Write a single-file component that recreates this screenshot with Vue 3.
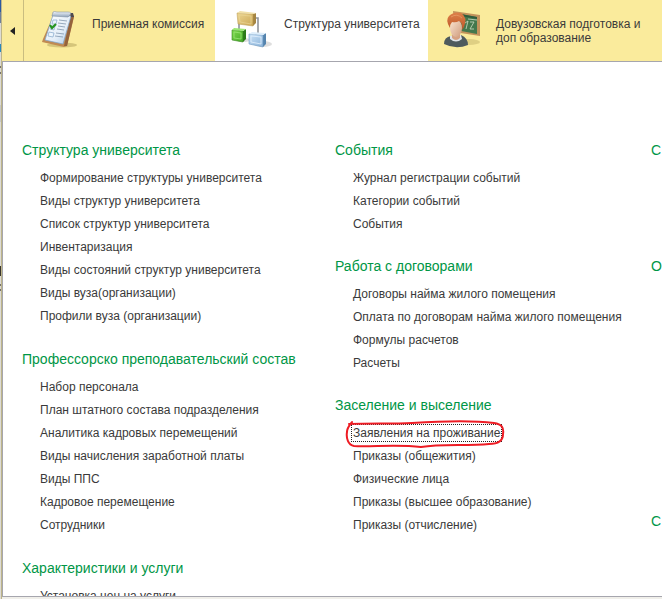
<template>
  <div class="workspace">
    <div class="backdrop" aria-hidden="true">
      <svg width="2" height="599" viewBox="0 0 2 599">
        <rect width="2" height="599" fill="#dddbd5" />
        <rect width="2" height="12" fill="#2c5aa0" />
        <rect y="12" width="2" height="11" fill="#6e7f99" />
        <rect y="44" width="2" height="8" fill="#2789bd" />
        <rect y="66" width="2" height="2" fill="#77736c" />
        <rect y="72" width="2" height="2" fill="#77736c" />
        <rect y="105" width="2" height="17" fill="#c7c7c7" />
        <rect y="266" width="2" height="10" fill="#39352c" />
        <rect y="284" width="2" height="2" fill="#77736c" />
        <rect y="289" width="2" height="2" fill="#77736c" />
        <rect x="1" width="1" height="599" fill="#bdb58a" />
      </svg>
    </div>

    <div class="window">
      <nav class="sections-bar">
        <button class="scroll-button" type="button" aria-label="Назад">
          <svg width="5" height="8" viewBox="0 0 5 8">
            <path d="M5 0V8L0 4Z" fill="#222" />
          </svg>
        </button>

        <button class="tab tab-admission" type="button">
          <svg class="tab-icon" width="40" height="40" viewBox="0 0 40 40">
            <defs>
              <linearGradient id="paper" x1="0" y1="0" x2="1" y2="1">
                <stop offset="0" stop-color="#ffffff" />
                <stop offset="0.6" stop-color="#e4eef8" />
                <stop offset="1" stop-color="#a9c8e6" />
              </linearGradient>
              <linearGradient id="clip" x1="0" y1="0" x2="0" y2="1">
                <stop offset="0" stop-color="#f4f7fb" />
                <stop offset="1" stop-color="#8fa3bb" />
              </linearGradient>
            </defs>
            <ellipse cx="22" cy="35" rx="15" ry="2.5" fill="#b7a55f" opacity="0.55" />
            <path d="M14 4L33 4L34 7L27 36L24 37L2 32L3 29Z" fill="#c08a52" />
            <path d="M31 5L34 6L27 36L24 36Z" fill="#94633c" />
            <path d="M13 5L31 6L23 34L5 30Z" fill="url(#paper)" stroke="#7ba4ce" stroke-width="0.7" />
            <path d="M30 3L33 3L34 7L31 7Z" fill="#4d4a50" />
            <path d="M13 2Q14 1 17 2H28Q32 2 30 5L28 7L12 6Z" fill="url(#clip)" stroke="#8190a3" stroke-width="0.6" />
            <path d="M13 10L17 10L16 14L12 14ZM11 16L15 16L14 20L10 19ZM9 22L14 23L13 27L8 26Z" fill="#edf5fc" stroke="#8fb0d0" stroke-width="0.8" />
            <path d="M19 10L27 11M18 13L26 14M18 16L25 17M17 19L24 20M16 23L24 24M15 26L23 27" stroke="#8095ad" stroke-width="0.8" />
            <path d="M10 15L12 18L16 14" fill="none" stroke="#259420" stroke-width="2.2" />
          </svg>
          <span class="tab-title">Приемная комиссия</span>
        </button>

        <button class="tab tab-structure tab-active" type="button">
          <svg class="tab-icon" width="44" height="40" viewBox="0 0 44 40">
            <defs>
              <linearGradient id="sand" x1="0" y1="0" x2="1" y2="1">
                <stop offset="0" stop-color="#ecd590" />
                <stop offset="1" stop-color="#cba857" />
              </linearGradient>
              <linearGradient id="leaf" x1="0" y1="0" x2="1" y2="1">
                <stop offset="0" stop-color="#7dd84e" />
                <stop offset="1" stop-color="#45ab27" />
              </linearGradient>
              <linearGradient id="sky" x1="0" y1="0" x2="1" y2="1">
                <stop offset="0" stop-color="#c9e1f6" />
                <stop offset="1" stop-color="#8cb4da" />
              </linearGradient>
            </defs>
            <ellipse cx="32" cy="34" rx="9" ry="3" fill="#c8c8c8" opacity="0.6" />
            <ellipse cx="12" cy="30" rx="7" ry="2" fill="#c8c8c8" opacity="0.6" />
            <path d="M8 14V21M24 8H27V24" fill="none" stroke="#90949b" stroke-width="1.6" />
            <path d="M22 4L25 3V13L22 16Z" fill="#a58542" />
            <path d="M6 3L22 4V16L7 14Z" fill="url(#sand)" stroke="#b7964e" stroke-width="0.5" />
            <path d="M8 5L20 6V14L9 12Z" fill="none" stroke="#e9d597" stroke-width="0.7" />
            <path d="M6 3L9 1L25 3L22 4Z" fill="#f1e0a8" />
            <path d="M12 21L15 19V29L12 32Z" fill="#2c7b19" />
            <path d="M1 20L12 21V32L1 30Z" fill="url(#leaf)" stroke="#37861f" stroke-width="0.6" />
            <path d="M3 22L10 23V29L3 28Z" fill="none" stroke="#99e573" stroke-width="0.8" />
            <path d="M1 20L3 18L15 19L12 21Z" fill="#9ce775" />
            <path d="M32 25L35 23V34L32 37Z" fill="#5484ae" />
            <path d="M18 24L32 25V37L18 34Z" fill="url(#sky)" stroke="#6d98c1" stroke-width="0.6" />
            <path d="M20 26L30 27V34L20 32Z" fill="none" stroke="#e2f0fc" stroke-width="0.8" />
            <path d="M18 24L21 22L35 23L32 25Z" fill="#deeefb" />
          </svg>
          <span class="tab-title">Структура университета</span>
        </button>

        <button class="tab tab-courses" type="button">
          <svg class="tab-icon" width="40" height="40" viewBox="0 0 40 40">
            <defs>
              <linearGradient id="face" x1="0" y1="0" x2="1" y2="1">
                <stop offset="0" stop-color="#fbe6d3" />
                <stop offset="1" stop-color="#cf9b7c" />
              </linearGradient>
              <linearGradient id="hair" x1="0" y1="0" x2="0" y2="1">
                <stop offset="0" stop-color="#dd8049" />
                <stop offset="1" stop-color="#bd5529" />
              </linearGradient>
            </defs>
            <ellipse cx="25" cy="32" rx="11" ry="3" fill="#b7a55f" opacity="0.4" />
            <path d="M9 1L36 5V26L10 22Z" fill="#c3935c" />
            <path d="M11 3L33 7V24L12 20Z" fill="#44784d" />
            <path d="M11 3L33 7V9L12 5Z" fill="#315c3d" />
            <path d="M21 13L24 11L22 19M26 12L30 12L26 19L30 19M24 9L33 10" fill="none" stroke="#bfd1b8" stroke-width="0.9" />
            <path d="M0 34Q0 27 7 26L17 25Q24 28 24 35Q12 40 0 34Z" fill="#4e5a5d" />
            <path d="M6 26L17 25L18 29Q12 34 6 29Z" fill="#dfe3e8" />
            <path d="M8 22H16V28Q12 32 8 28Z" fill="#d6a283" />
            <ellipse cx="12" cy="18" rx="6" ry="9" fill="url(#face)" />
            <path d="M6 18Q1 10 5 6Q10 1 17 3Q24 7 20 17L18 20Q19 13 15 11Q12 13 8 12Q6 14 6 18Z" fill="url(#hair)" />
            <path d="M7 7Q13 3 18 8" fill="none" stroke="#eaa06c" stroke-width="0.7" />
          </svg>
          <span class="tab-title">Довузовская подготовка и доп образование</span>
        </button>
      </nav>

      <main class="menu-panel">
        <div v-for="(column, index) in columns" :key="index" class="menu-column">
          <section
            v-for="(group, groupIndex) in column"
            :key="groupIndex"
            class="menu-group"
            :style="{ height: groupHeight(group) }"
          >
            <h2 class="group-title">{{ group.title }}</h2>
            <ul v-if="group.items" class="group-items">
              <li v-for="item in group.items" :key="item" class="group-item">
                <a
                  href="#"
                  class="menu-link"
                  :class="{ 'menu-link-selected': item === selectedItem }"
                  @click.prevent="selectedItem = item"
                >{{ item }}</a>
                <svg v-if="item === markedItem" class="marker" width="160" height="30" viewBox="0 0 160 30">
                  <path
                    d="M4 5C25 4 46 5 67 4C98 2 126 1 149 4C157 5 159 9 158 15C158 22 152 25 144 25C122 27 96 25 76 28C52 25 27 28 9 27C3 26 1 19 2 13C2 9 4 7 7 3"
                    fill="none"
                    stroke="#ee1c24"
                    stroke-width="2"
                    stroke-linecap="round"
                  />
                </svg>
              </li>
            </ul>
          </section>
        </div>
      </main>
      <div class="window-edge"></div>
    </div>
  </div>
</template>

<script setup>
import { ref } from 'vue'

const markedItem = 'Заявления на проживание'
const selectedItem = ref(markedItem)

const columns = [
  [
    {
      title: 'Структура университета',
      items: [
        'Формирование структуры университета',
        'Виды структур университета',
        'Список структур университета',
        'Инвентаризация',
        'Виды состояний структур университета',
        'Виды вуза(организации)',
        'Профили вуза (организации)'
      ]
    },
    {
      title: 'Профессорско преподавательский состав',
      items: [
        'Набор персонала',
        'План штатного состава подразделения',
        'Аналитика кадровых перемещений',
        'Виды начисления заработной платы',
        'Виды ППС',
        'Кадровое перемещение',
        'Сотрудники'
      ]
    },
    {
      title: 'Характеристики и услуги',
      items: ['Установка цен на услуги']
    }
  ],
  [
    {
      title: 'События',
      items: ['Журнал регистрации событий', 'Категории событий', 'События']
    },
    {
      title: 'Работа с договорами',
      items: [
        'Договоры найма жилого помещения',
        'Оплата по договорам найма жилого помещения',
        'Формулы расчетов',
        'Расчеты'
      ]
    },
    {
      title: 'Заселение и выселение',
      items: [
        'Заявления на проживание',
        'Приказы (общежития)',
        'Физические лица',
        'Приказы (высшее образование)',
        'Приказы (отчисление)'
      ]
    }
  ],
  [
    { title: 'С', rows: 3 },
    { title: 'О', rows: 9 },
    { title: 'С', rows: 1 }
  ]
]

// the title and the gap under a group take two rows
const groupHeight = (group) => {
  const rows = group.items ? group.items.length : group.rows
  return `${Math.floor((rows + 2) * 23.25)}px`
}
</script>

<style>
body {
  margin: 0;
  overflow: hidden;
}
</style>

<style scoped>
.workspace {
  display: flex;
  height: 100vh;
  font-family: "Liberation Sans", Arial, sans-serif;
  font-size: 12px;
  color: #3a3a3a;
  background: #fff;
}

.backdrop {
  width: 2px;
  flex: none;
  overflow: hidden;
  background: #dddbd5;
}

.window {
  flex: 1;
  min-width: 0;
  display: flex;
  flex-direction: column;
}

.sections-bar {
  display: flex;
  flex: none;
  height: 61px;
  background: #faeb9c;
}

.scroll-button,
.tab {
  border: 0;
  padding: 0;
  font: inherit;
  color: inherit;
  background: none;
  cursor: pointer;
}

.scroll-button {
  display: flex;
  align-items: center;
  justify-content: center;
  width: 22px;
  flex: none;
  border-right: 1px solid #c9bd80;
}

.tab {
  display: flex;
  align-items: flex-start;
  box-sizing: border-box;
  padding-top: 10px;
  text-align: left;
}

.tab-admission {
  width: 191px;
  flex: none;
  padding-left: 16px;
  gap: 12px;
}

.tab-structure {
  width: 213px;
  flex: none;
  padding-left: 16px;
  gap: 9px;
}

.tab-courses {
  flex: 1;
  min-width: 0;
  padding-left: 16px;
  gap: 12px;
}

.tab-active {
  background: #fff;
}

.tab-icon {
  flex: none;
}

.tab-title {
  padding-top: 7px;
  line-height: 14px;
}

.menu-panel {
  flex: 1;
  min-height: 0;
  display: grid;
  grid-template-columns: 313px 316px 1fr;
  box-sizing: border-box;
  padding: 78px 0 0 19px;
  overflow: hidden;
  background: #fff;
  border: 1px solid #a6a6ae;
  border-right: 0;
}

.menu-column {
  min-width: 0;
}

.group-title {
  margin: 0 0 7px;
  font-size: 14px;
  font-weight: normal;
  line-height: 20px;
  white-space: nowrap;
  color: #009646;
}

.group-items {
  margin: 0;
  padding: 0 0 0 18px;
  list-style: none;
}

.group-item {
  position: relative;
  height: 23px;
  line-height: 23px;
  white-space: nowrap;
}

.menu-link {
  color: inherit;
  text-decoration: none;
}

.menu-link:hover {
  text-decoration: underline;
}

.menu-link-selected {
  outline: 1px dotted #222;
  outline-offset: 1px;
}

.marker {
  position: absolute;
  top: -3px;
  left: -8px;
  pointer-events: none;
}

.window-edge {
  height: 2px;
  flex: none;
  background: #f0efea;
}
</style>
